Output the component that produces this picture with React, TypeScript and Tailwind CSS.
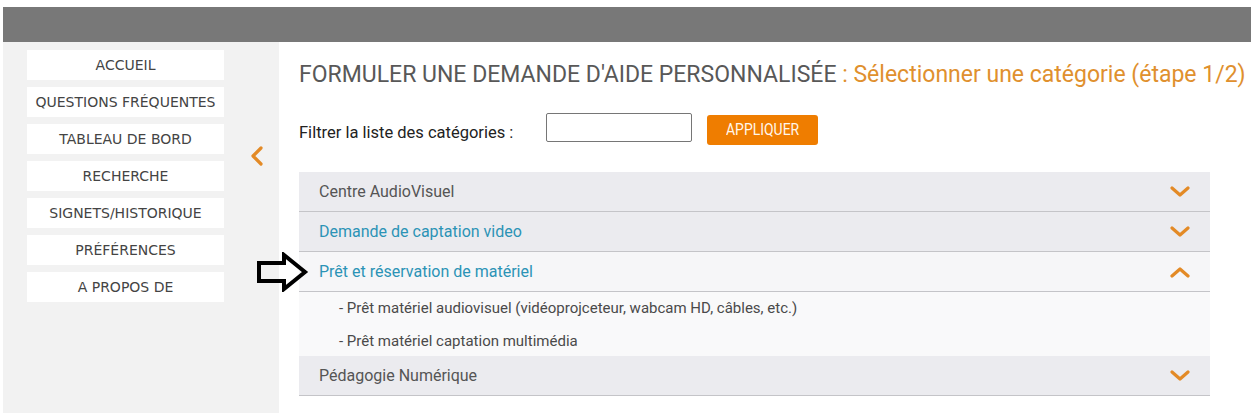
import React from "react";

const menu = [
  "ACCUEIL",
  "QUESTIONS FRÉQUENTES",
  "TABLEAU DE BORD",
  "RECHERCHE",
  "SIGNETS/HISTORIQUE",
  "PRÉFÉRENCES",
  "A PROPOS DE",
];

function Chevron({ up = false }: { up?: boolean }) {
  return (
    <svg width="20" height="12" viewBox="0 0 20 12" className="shrink-0">
      <path
        d={up ? "M2 10 L10 3 L18 10" : "M2 2 L10 9 L18 2"}
        fill="none"
        stroke="#e38a26"
        strokeWidth="3.2"
        strokeLinecap="round"
        strokeLinejoin="round"
      />
    </svg>
  );
}

function Row({
  label,
  active = false,
  open = false,
  light = false,
}: {
  label: string;
  active?: boolean;
  open?: boolean;
  light?: boolean;
}) {
  return (
    <div
      className={`h-[40px] flex items-center justify-between pl-[20px] pr-[20px] border-b border-[#c4c4c8] ${
        light ? "bg-[#f6f6f8]" : "bg-[#ebebef]"
      }`}
    >
      <span className={`text-[16px] ${active ? "text-[#2b93b6]" : "text-[#555]"}`}>{label}</span>
      <Chevron up={open} />
    </div>
  );
}

export default function App() {
  return (
    <div
      className="w-[1251px] h-[413px] bg-white pt-[7px] pl-[3px] overflow-hidden"
      style={{ fontFamily: "Roboto, 'Noto Sans', sans-serif" }}
    >
      <div className="h-[35px] bg-[#787878]" />
      <div className="flex h-[371px]">
        <div className="w-[276px] bg-[#f2f2f2] flex">
          <div className="pl-[24px] pt-[8px] flex flex-col gap-[7px]">
            {menu.map((m) => (
              <div
                key={m}
                className="w-[197px] h-[30px] bg-white flex items-center justify-center text-[14px] text-[#444]"
                style={{ fontFamily: "'DejaVu Sans', Verdana, sans-serif" }}
              >
                {m}
              </div>
            ))}
          </div>
          <div className="ml-[26px] mt-[104px]">
            <svg width="14" height="20" viewBox="0 0 14 20">
              <path
                d="M11 2 L3 10 L11 18"
                fill="none"
                stroke="#e38a26"
                strokeWidth="3.2"
                strokeLinecap="round"
                strokeLinejoin="round"
              />
            </svg>
          </div>
        </div>
        <div className="flex-1 pl-[20px] pt-[18px]">
          <h1 className="text-[23px] leading-[30px] text-[#585858] whitespace-nowrap">
            FORMULER UNE DEMANDE D'AIDE PERSONNALISÉE{" "}
            <span className="text-[#e0902e]">: Sélectionner une catégorie (étape 1/2)</span>
          </h1>
          <div className="flex items-center mt-[24px] h-[32px]">
            <span className="text-[16.5px] text-[#222] w-[247px] pt-[6px] whitespace-nowrap">
              Filtrer la liste des catégories :
            </span>
            <input
              type="text"
              className="w-[146px] h-[29px] border border-[#767676] rounded-[2px] bg-white -mt-[6px]"
            />
            <button
              type="button"
              className="ml-[15px] w-[111px] h-[30px] bg-[#ef7d00] rounded-[3px] text-[#fff6ea] text-[17px] flex items-center justify-center"
            >
              <span className="inline-block scale-x-[0.82]">APPLIQUER</span>
            </button>
          </div>
          <div className="w-[911px] mt-[26px] relative">
            <Row label="Centre AudioVisuel" />
            <Row label="Demande de captation video" active />
            <Row label="Prêt et réservation de matériel" active open light />
            <div className="bg-[#f9f9fa] pl-[40px] pt-[1px] h-[64px] text-[15px] text-[#4a4a4a]">
              <div className="h-[30px] flex items-center">
                - Prêt matériel audiovisuel (vidéoprojceteur, wabcam HD, câbles, etc.)
              </div>
              <div className="h-[30px] mt-[3px] flex items-center">- Prêt matériel captation multimédia</div>
            </div>
            <Row label="Pédagogie Numérique" />
            <svg
              width="52"
              height="40"
              viewBox="0 0 52 40"
              className="absolute left-[-42px] top-[80px]"
            >
              <path
                d="M2 11 L27 11 L27 3 L48 20 L27 37 L27 29 L2 29 Z"
                fill="none"
                stroke="#000"
                strokeWidth="4"
                strokeLinejoin="miter"
              />
            </svg>
          </div>
        </div>
      </div>
    </div>
  );
}
